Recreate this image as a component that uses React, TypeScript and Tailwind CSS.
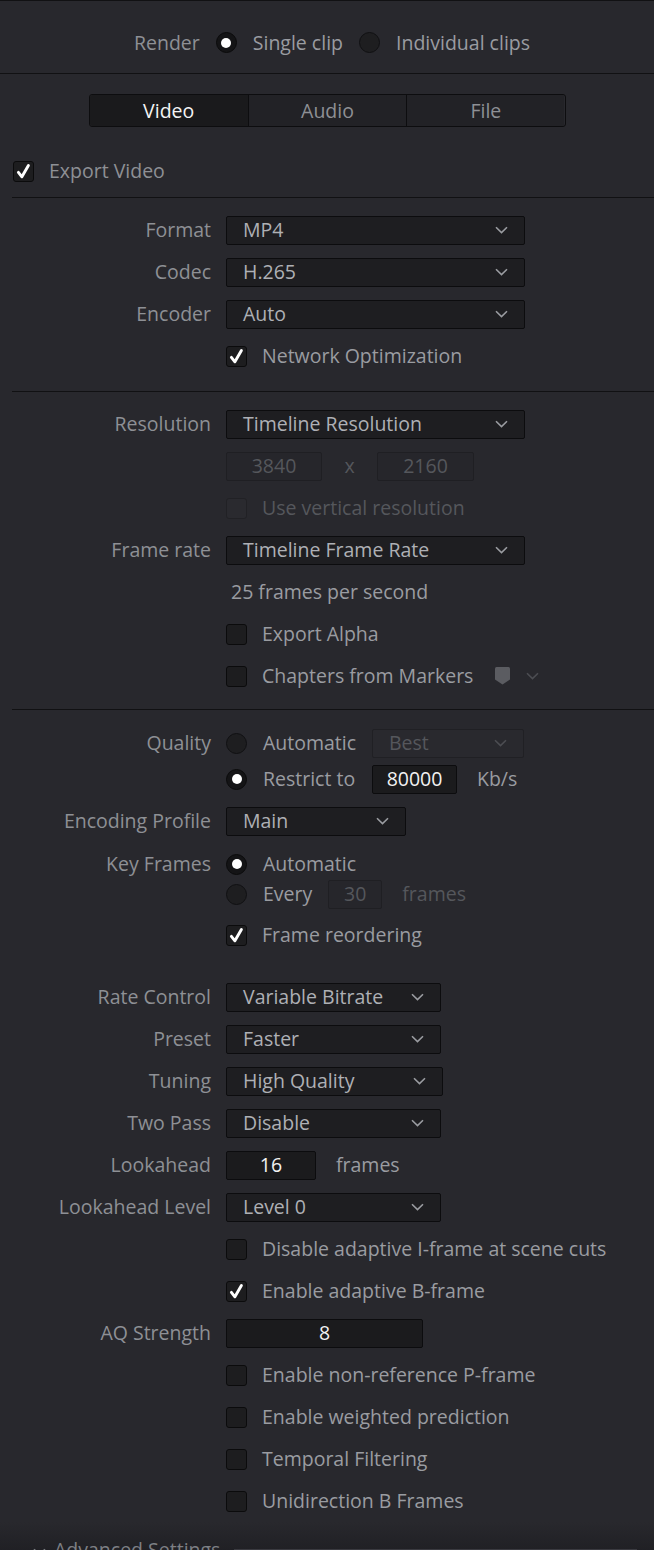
import React from 'react';

const LABEL = 'w-[211px] shrink-0 text-right text-[#8e9095]';

function Chevron({ dim }: { dim?: boolean }) {
  return (
    <svg width="13" height="8" viewBox="0 0 13 8" className="shrink-0">
      <path d="M1 1.2 L6.5 6.6 L12 1.2" fill="none" stroke={dim ? '#4c4d52' : '#9a9ca1'} strokeWidth="1.6" />
    </svg>
  );
}

function Select({ value, className, dim }: { value: string; className: string; dim?: boolean }) {
  return (
    <div
      className={`flex h-[29px] items-center justify-between rounded-[2px] border pl-[16px] pr-[16px] ${
        dim ? 'border-[#202024] bg-[#29292e] text-[#55575c]' : 'border-[#0c0c0e] bg-[#1e1e21] text-[#aeb0b5]'
      } ${className}`}
    >
      <span>{value}</span>
      <Chevron dim={dim} />
    </div>
  );
}

function Field({ value, className, dim }: { value: string; className: string; dim?: boolean }) {
  return (
    <div
      className={`flex h-[29px] items-center justify-center rounded-[2px] border ${
        dim ? 'border-[#1f1f23] bg-[#26262b] text-[#55575c]' : 'border-[#0c0c0e] bg-[#1b1b1d] text-[#f2f2f2]'
      } ${className}`}
    >
      {value}
    </div>
  );
}

function Check({ checked, dim }: { checked?: boolean; dim?: boolean }) {
  return (
    <div
      className={`flex h-[21px] w-[21px] shrink-0 items-center justify-center rounded-[3px] border ${
        dim ? 'border-[#212125] bg-[#2a2a2f]' : 'border-[#0b0b0c] bg-[#1d1d1f]'
      }`}
    >
      {checked && (
        <svg width="19" height="19" viewBox="0 0 19 19">
          <path d="M4.4 10.4 L7.9 14.8 L14.4 3.6" fill="none" stroke="#ffffff" strokeWidth="2.9" strokeLinecap="round" strokeLinejoin="round" />
        </svg>
      )}
    </div>
  );
}

function Radio({ on }: { on?: boolean }) {
  return (
    <div
      className={`flex h-[21px] w-[21px] shrink-0 items-center justify-center rounded-full border ${
        on ? 'border-[#0a0a0b] bg-[#141416]' : 'border-[#101012] bg-[#1e1e20]'
      }`}
    >
      {on && <div className="h-[10px] w-[10px] rounded-full bg-white" />}
    </div>
  );
}

function CheckLine({ text, checked, dim }: { text: string; checked?: boolean; dim?: boolean }) {
  return (
    <div className="flex items-center">
      <Check checked={checked} dim={dim} />
      <span className={`ml-[15px] ${dim ? 'text-[#55575c]' : 'text-[#9a9ca1]'}`}>{text}</span>
    </div>
  );
}

function Row({ label, className, children }: { label?: string; className: string; children: React.ReactNode }) {
  return (
    <div className={`flex items-center ${className}`}>
      <div className={LABEL}>{label}</div>
      <div className="ml-[15px] flex items-center">{children}</div>
    </div>
  );
}

function Divider() {
  return <div className="ml-[12px] h-px bg-[#111113]" />;
}

export default function App() {
  return (
    <div className="h-[1550px] w-[654px] overflow-hidden bg-[#28282d] font-['Open_Sans',sans-serif] text-[19.5px] leading-none">
      <div className="h-px bg-[#111113]" />

      <div className="flex h-[72px] items-center justify-center pl-[10px] pt-[11px] text-[#8e9095]">
        <span>Render</span>
        <div className="ml-[16px]">
          <Radio on />
        </div>
        <span className="ml-[16px] text-[#9a9ca1]">Single clip</span>
        <div className="ml-[16px]">
          <Radio />
        </div>
        <span className="ml-[16px] text-[#9a9ca1]">Individual clips</span>
      </div>
      <div className="h-px bg-[#111113]" />

      <div className="mx-auto mt-[20px] grid h-[33px] w-[477px] grid-cols-3 overflow-hidden rounded-[3px] border border-[#0d0d0f]">
        <div className="flex items-center justify-center bg-[#1a1a1c] text-[#f4f4f4]">Video</div>
        <div className="flex items-center justify-center border-l border-[#0d0d0f] bg-[#222226] text-[#8e9095]">Audio</div>
        <div className="flex items-center justify-center border-l border-[#0d0d0f] bg-[#222226] text-[#8e9095]">File</div>
      </div>

      <div className="mt-[23px] flex h-[42px] items-center pl-[13px]">
        <Check checked />
        <span className="ml-[15px] text-[#8e9095]">Export Video</span>
      </div>
      <div className="mt-[5px]">
        <Divider />
      </div>

      <div className="mt-[11px]">
        <Row label="Format" className="h-[42px]">
          <Select value="MP4" className="w-[299px]" />
        </Row>
        <Row label="Codec" className="h-[42px]">
          <Select value="H.265" className="w-[299px]" />
        </Row>
        <Row label="Encoder" className="h-[42px]">
          <Select value="Auto" className="w-[299px]" />
        </Row>
        <Row className="h-[42px]">
          <CheckLine text="Network Optimization" checked />
        </Row>
      </div>
      <div className="mt-[14px]">
        <Divider />
      </div>

      <div className="mt-[11px]">
        <Row label="Resolution" className="h-[42px]">
          <Select value="Timeline Resolution" className="w-[299px]" />
        </Row>
        <Row className="h-[42px]">
          <Field value="3840" dim className="w-[96px]" />
          <span className="w-[55px] text-center text-[#55575c]">x</span>
          <Field value="2160" dim className="w-[97px]" />
        </Row>
        <Row className="h-[42px]">
          <CheckLine text="Use vertical resolution" dim />
        </Row>
        <Row label="Frame rate" className="h-[42px]">
          <Select value="Timeline Frame Rate" className="w-[299px]" />
        </Row>
        <Row className="h-[42px]">
          <span className="ml-[5px] text-[#9a9ca1]">25 frames per second</span>
        </Row>
        <Row className="h-[42px]">
          <CheckLine text="Export Alpha" />
        </Row>
        <Row className="h-[42px]">
          <CheckLine text="Chapters from Markers" />
          <svg width="15" height="18" viewBox="0 0 15 18" className="ml-[22px]">
            <path d="M0 1.5 Q0 0 1.5 0 H13.5 Q15 0 15 1.5 V12.5 L7.5 17.5 L0 12.5 Z" fill="#5b5c61" />
          </svg>
          <svg width="13" height="8" viewBox="0 0 13 8" className="ml-[16px]">
            <path d="M1 1.2 L6.5 6.6 L12 1.2" fill="none" stroke="#4c4d52" strokeWidth="1.6" />
          </svg>
        </Row>
      </div>
      <div className="mt-[12px]">
        <Divider />
      </div>

      <div className="mt-[15px]">
        <Row label="Quality" className="h-[36px]">
          <div className="flex w-[146px] items-center">
            <Radio />
            <span className="ml-[16px] text-[#9a9ca1]">Automatic</span>
          </div>
          <Select value="Best" dim className="w-[152px]" />
        </Row>
        <Row className="h-[36px]">
          <div className="flex w-[146px] items-center">
            <Radio on />
            <span className="ml-[16px] text-[#9a9ca1]">Restrict to</span>
          </div>
          <Field value="80000" className="w-[85px]" />
          <span className="ml-[20px] text-[#9a9ca1]">Kb/s</span>
        </Row>
        <Row label="Encoding Profile" className="mt-[3px] h-[42px]">
          <Select value="Main" className="w-[180px]" />
        </Row>
        <Row label="Key Frames" className="mt-[7px] h-[30px]">
          <Radio on />
          <span className="ml-[16px] text-[#9a9ca1]">Automatic</span>
        </Row>
        <Row className="h-[30px]">
          <Radio />
          <span className="ml-[16px] text-[#9a9ca1]">Every</span>
          <Field value="30" dim className="ml-[16px] w-[54px]" />
          <span className="ml-[20px] text-[#55575c]">frames</span>
        </Row>
        <Row className="mt-[5px] h-[42px]">
          <CheckLine text="Frame reordering" checked />
        </Row>
      </div>

      <div className="mt-[20px]">
        <Row label="Rate Control" className="h-[42px]">
          <Select value="Variable Bitrate" className="w-[215px]" />
        </Row>
        <Row label="Preset" className="h-[42px]">
          <Select value="Faster" className="w-[215px]" />
        </Row>
        <Row label="Tuning" className="h-[42px]">
          <Select value="High Quality" className="w-[217px]" />
        </Row>
        <Row label="Two Pass" className="h-[42px]">
          <Select value="Disable" className="w-[215px]" />
        </Row>
        <Row label="Lookahead" className="h-[42px]">
          <Field value="16" className="w-[90px]" />
          <span className="ml-[20px] text-[#9a9ca1]">frames</span>
        </Row>
        <Row label="Lookahead Level" className="h-[42px]">
          <Select value="Level 0" className="w-[215px]" />
        </Row>
        <Row className="h-[42px]">
          <CheckLine text="Disable adaptive I-frame at scene cuts" />
        </Row>
        <Row className="h-[42px]">
          <CheckLine text="Enable adaptive B-frame" checked />
        </Row>
        <Row label="AQ Strength" className="h-[42px]">
          <Field value="8" className="w-[197px]" />
        </Row>
        <Row className="h-[42px]">
          <CheckLine text="Enable non-reference P-frame" />
        </Row>
        <Row className="h-[42px]">
          <CheckLine text="Enable weighted prediction" />
        </Row>
        <Row className="h-[42px]">
          <CheckLine text="Temporal Filtering" />
        </Row>
        <Row className="h-[42px]">
          <CheckLine text="Unidirection B Frames" />
        </Row>
      </div>

      <div className="h-[40px] bg-gradient-to-b from-[#28282d] to-[#1d1d21] pl-[33px] pt-[18px]">
        <div className="flex items-start">
          <svg width="13" height="8" viewBox="0 0 13 8" className="mt-[8px]">
            <path d="M1 1.2 L6.5 6.6 L12 1.2" fill="none" stroke="#7d7f84" strokeWidth="1.6" />
          </svg>
          <span className="ml-[8px] text-[#7d7f84]">Advanced Settings</span>
          <div className="ml-[14px] mr-[17px] mt-[9px] h-px flex-1 bg-[#3a3a40]" />
        </div>
      </div>
    </div>
  );
}
